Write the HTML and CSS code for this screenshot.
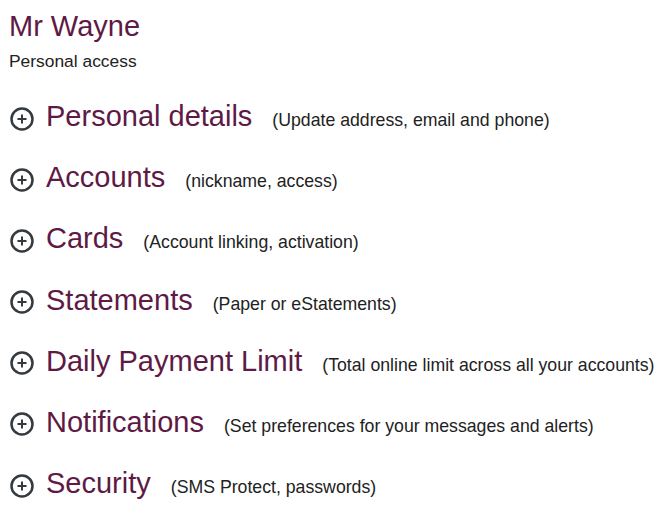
FILE: index.html
```html
<!DOCTYPE html>
<html lang="en">
<head>
  <meta charset="UTF-8">
  <title>Mr Wayne – Personal access</title>
  <link rel="stylesheet" href="styles.css">
</head>
<body>

  <header class="profile">
    <h1>Mr Wayne</h1>
    <p class="access">Personal access</p>
  </header>

  <ul class="settings">
    <li class="item">
      <svg class="icon-plus" viewBox="0 0 24 24"><circle cx="12" cy="12" r="10.5"/><path d="M12 7.5v9M7.5 12h9"/></svg>
      <span class="item-text"><a class="item-title" href="#">Personal details</a><span class="item-note">(Update address, email and phone)</span></span>
    </li>
    <li class="item">
      <svg class="icon-plus" viewBox="0 0 24 24"><circle cx="12" cy="12" r="10.5"/><path d="M12 7.5v9M7.5 12h9"/></svg>
      <span class="item-text"><a class="item-title" href="#">Accounts</a><span class="item-note">(nickname, access)</span></span>
    </li>
    <li class="item">
      <svg class="icon-plus" viewBox="0 0 24 24"><circle cx="12" cy="12" r="10.5"/><path d="M12 7.5v9M7.5 12h9"/></svg>
      <span class="item-text"><a class="item-title" href="#">Cards</a><span class="item-note">(Account linking, activation)</span></span>
    </li>
    <li class="item">
      <svg class="icon-plus" viewBox="0 0 24 24"><circle cx="12" cy="12" r="10.5"/><path d="M12 7.5v9M7.5 12h9"/></svg>
      <span class="item-text"><a class="item-title" href="#">Statements</a><span class="item-note">(Paper or eStatements)</span></span>
    </li>
    <li class="item">
      <svg class="icon-plus" viewBox="0 0 24 24"><circle cx="12" cy="12" r="10.5"/><path d="M12 7.5v9M7.5 12h9"/></svg>
      <span class="item-text"><a class="item-title" href="#">Daily Payment Limit</a><span class="item-note">(Total online limit across all your accounts)</span></span>
    </li>
    <li class="item">
      <svg class="icon-plus" viewBox="0 0 24 24"><circle cx="12" cy="12" r="10.5"/><path d="M12 7.5v9M7.5 12h9"/></svg>
      <span class="item-text"><a class="item-title" href="#">Notifications</a><span class="item-note">(Set preferences for your messages and alerts)</span></span>
    </li>
    <li class="item">
      <svg class="icon-plus" viewBox="0 0 24 24"><circle cx="12" cy="12" r="10.5"/><path d="M12 7.5v9M7.5 12h9"/></svg>
      <span class="item-text"><a class="item-title" href="#">Security</a><span class="item-note">(SMS Protect, passwords)</span></span>
    </li>
  </ul>

</body>
</html>
```

FILE: styles.css
```css
:root {
  --plum: #5e1a45;
  --ink: #222;
  --icon: #353a3e;
}

body {
  font-family: "Liberation Sans", Arial, Helvetica, sans-serif;
  background: #fff;
  color: var(--ink);
  margin: 0;
  padding: 10px 0 0 9px;
}

h1 {
  margin: 0;
  color: var(--plum);
  font-size: 29px;
  font-weight: normal;
  line-height: 32px;
}

.access {
  margin: 9px 0 0;
  font-size: 17.4px;
  line-height: 20px;
}

.settings {
  list-style: none;
  margin: 29px 0 0;
  padding: 0;
}

.item {
  display: flex;
  align-items: flex-start;
  height: 32px;
  margin-bottom: 29.2px;
  white-space: nowrap;
}

.icon-plus {
  width: 24px;
  height: 24px;
  margin: 6.5px 12px 0 1px;
  flex: none;
  fill: none;
  stroke: var(--icon);
}

.icon-plus circle {
  stroke-width: 2.5;
}

.icon-plus path {
  stroke-width: 2;
}

.item-text {
  line-height: 32px;
}

.item-title {
  color: var(--plum);
  font-size: 29px;
  text-decoration: none;
}

.item-note {
  margin-left: 20px;
  font-size: 17.7px;
}
```
